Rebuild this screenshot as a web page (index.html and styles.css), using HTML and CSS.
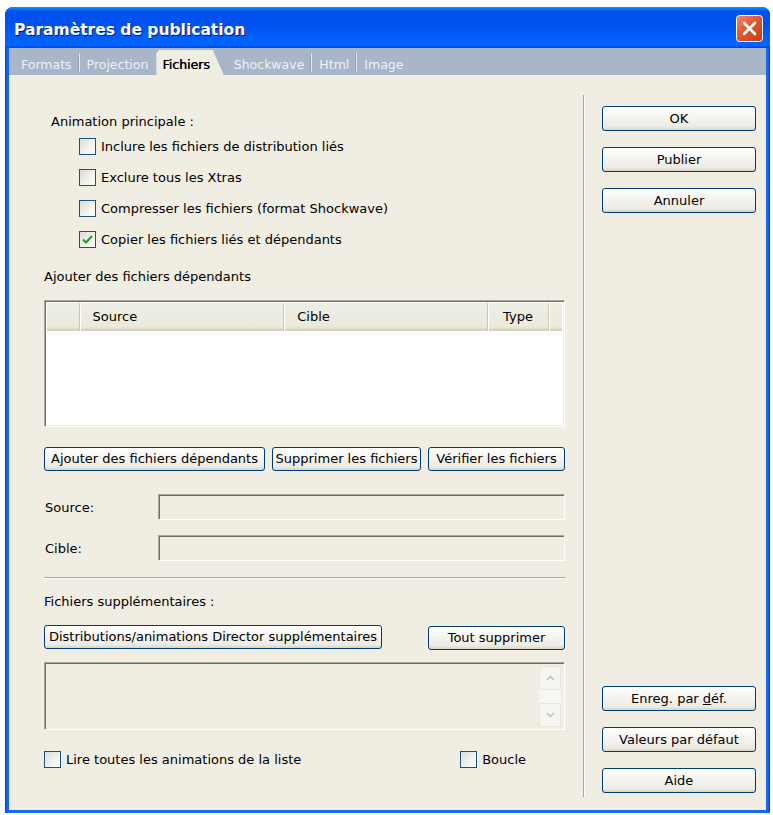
FILE: index.html
```html
<!DOCTYPE html>
<html lang="fr">
<head>
    <meta charset="UTF-8">
    <meta name="viewport" content="width=device-width, initial-scale=1.0">
    <title>Paramètres de publication</title>
    <link rel="stylesheet" href="styles.css">
</head>
<body>
    <div class="window">
        <div class="titlebar">
            <span class="title">Paramètres de publication</span>
            <span class="close">
                <svg width="27" height="27" viewBox="0 0 27 27">
                    <defs>
                        <linearGradient id="closeFill" x1="0" y1="0" x2="1" y2="1">
                            <stop offset="0" stop-color="#f08a6a"/>
                            <stop offset="0.45" stop-color="#e0582f"/>
                            <stop offset="1" stop-color="#c23c14"/>
                        </linearGradient>
                    </defs>
                    <rect x="0.5" y="0.5" width="26" height="26" rx="3" fill="url(#closeFill)" stroke="#fff"/>
                    <path d="M8 8 L19 19 M19 8 L8 19" stroke="#fff" stroke-width="2.6" stroke-linecap="round"/>
                </svg>
            </span>
        </div>
        <div class="frame">
            <div class="tabs">
                <span class="tab">Formats</span><span class="tab-sep"></span>
                <span class="tab">Projection</span>
                <span class="tab active">Fichiers</span>
                <span class="tab">Shockwave</span><span class="tab-sep"></span>
                <span class="tab">Html</span><span class="tab-sep"></span>
                <span class="tab">Image</span>
            </div>
            <div class="page">
                <div class="main">
                    <div class="heading heading-main">Animation principale :</div>
                    <div class="options">
                        <label class="check"><span class="box"></span>Inclure les fichiers de distribution liés</label>
                        <label class="check"><span class="box"></span>Exclure tous les Xtras</label>
                        <label class="check"><span class="box"></span>Compresser les fichiers (format Shockwave)</label>
                        <label class="check">
                            <span class="box">
                                <svg width="15" height="15" viewBox="0 0 15 15"><path d="M3 7.5 L6 10.5 L12 4" fill="none" stroke="#21a121" stroke-width="2.2"/></svg>
                            </span>Copier les fichiers liés et dépendants
                        </label>
                    </div>

                    <div class="heading heading-deps">Ajouter des fichiers dépendants</div>
                    <div class="listview">
                        <div class="lv-header">
                            <span class="col col-icon"></span>
                            <span class="col col-source">Source</span>
                            <span class="col col-target">Cible</span>
                            <span class="col col-type">Type</span>
                            <span class="col col-rest"></span>
                        </div>
                    </div>
                    <div class="btn-row btn-row-deps">
                        <span class="btn btn-add">Ajouter des fichiers dépendants</span>
                        <span class="btn btn-remove">Supprimer les fichiers</span>
                        <span class="btn btn-verify">Vérifier les fichiers</span>
                    </div>

                    <div class="field field-source"><span class="field-label">Source:</span><div class="field-box"></div></div>
                    <div class="field field-target"><span class="field-label">Cible:</span><div class="field-box"></div></div>

                    <div class="hr"></div>

                    <div class="heading heading-extra">Fichiers supplémentaires :</div>
                    <div class="btn-row btn-row-extra">
                        <span class="btn btn-extra">Distributions/animations Director supplémentaires</span>
                        <span class="btn btn-clear">Tout supprimer</span>
                    </div>
                    <div class="extra-list">
                        <div class="scrollbar">
                            <span class="sb-btn">
                                <svg width="9" height="6" viewBox="0 0 9 6"><path d="M1 5 L4.5 1.5 L8 5" fill="none" stroke="#c4c2b6" stroke-width="1.6"/></svg>
                            </span>
                            <span class="sb-track"></span>
                            <span class="sb-btn">
                                <svg width="9" height="6" viewBox="0 0 9 6"><path d="M1 1 L4.5 4.5 L8 1" fill="none" stroke="#c4c2b6" stroke-width="1.6"/></svg>
                            </span>
                        </div>
                    </div>
                    <div class="bottom-opts">
                        <label class="check"><span class="box"></span>Lire toutes les animations de la liste</label>
                        <label class="check"><span class="box"></span>Boucle</label>
                    </div>
                </div>

                <div class="vsep"></div>

                <div class="side">
                    <div class="side-group">
                        <span class="btn">OK</span>
                        <span class="btn">Publier</span>
                        <span class="btn">Annuler</span>
                    </div>
                    <div class="side-group">
                        <span class="btn">Enreg. par <u>d</u>éf.</span>
                        <span class="btn">Valeurs par défaut</span>
                        <span class="btn">Aide</span>
                    </div>
                </div>
            </div>
        </div>
    </div>
</body>
</html>
```

FILE: styles.css
```css
body{
    margin: 0;
    background-color: #fff;
    font-family: "DejaVu Sans", Verdana, sans-serif;
    font-size: 13px;
    color: #000;
}

/* window frame */
.window{
    margin: 7px 0 0 5px;
    width: 765px;
    height: 806px;
    display: flex;
    flex-direction: column;
    border-radius: 8px 8px 0 0;
    background: linear-gradient(to right, #0831d9, #166aee 2px, #166aee calc(100% - 2px), #0831d9);
    overflow: hidden;
}

.titlebar{
    height: 41px;
    flex-shrink: 0;
    display: flex;
    align-items: center;
    justify-content: space-between;
    padding: 0 7px 0 9px;
    background: linear-gradient(to bottom, #0997ff 0%, #0053ee 10%, #0050ee 40%, #0063fb 85%, #0066ff 92%, #005bff 95%, #003dd7 100%);
}

.title{
    margin-top: 5px;
    color: #fff;
    font-weight: bold;
    font-size: 15.5px;
    text-shadow: 1px 1px 0 #0a1883;
}

.close{
    margin-top: 2px;
    width: 27px;
    height: 27px;
    display: block;
}

.close svg{
    display: block;
}

.frame{
    flex: 1;
    margin: 0 4px 3px 4px;
    display: flex;
    flex-direction: column;
    background-color: #f0ede3;
}

/* tab strip */
.tabs{
    height: 27px;
    flex-shrink: 0;
    display: flex;
    align-items: flex-end;
    padding-left: 8px;
    background-color: #a9b5c8;
    font-size: 12.5px;
}

.tab{
    height: 25px;
    line-height: 21px;
    padding: 4px 4px 0 4px;
    box-sizing: border-box;
    color: #eef1f5;
    white-space: nowrap;
}

.tab.active{
    margin: 0 6px 0 4px;
    padding: 4px 14px 0 6px;
    color: #000;
    text-shadow: 0.4px 0 0 #000;
    background-color: #f0ede3;
    clip-path: polygon(0 3px, 3px 0, calc(100% - 11px) 0, 100% 100%, 0 100%);
}

.tab-sep{
    align-self: center;
    margin: 2px 3px 0 3px;
    width: 1px;
    height: 19px;
    background-color: #e4e8ee;
    box-shadow: -1px 0 0 #97a3b8;
}

/* page body */
.page{
    flex: 1;
    display: flex;
}

.main{
    width: 574px;
    box-sizing: border-box;
    padding: 39px 18px 0 35px;
}

.heading{
    line-height: 16px;
    height: 16px;
}

.heading-main{
    margin-left: 7px;
}

.heading-deps{
    margin-top: 21px;
}

.heading-extra{
    margin-top: 15px;
}

.options{
    margin: 8px 0 0 35px;
    display: flex;
    flex-direction: column;
    gap: 14px;
}

.check{
    display: flex;
    align-items: center;
    gap: 5px;
    height: 17px;
    line-height: 17px;
    white-space: nowrap;
}

.box{
    width: 17px;
    height: 17px;
    box-sizing: border-box;
    border: 1px solid #1c5180;
    background: linear-gradient(135deg, #dcdcd7, #f6f6f3 70%, #fff);
    display: flex;
    align-items: center;
    justify-content: center;
    flex-shrink: 0;
}

/* list of dependent files */
.listview{
    margin-top: 15px;
    height: 127px;
    box-sizing: border-box;
    border: 1px solid;
    border-color: #aca899 #fff #fff #aca899;
    box-shadow: inset 1px 1px 0 #716f64, inset -1px -1px 0 #f1efe2;
    background-color: #fff;
    padding: 2px 2px 1px 2px;
}

.lv-header{
    display: flex;
    height: 28px;
    background: linear-gradient(to bottom, #efeee6, #ebeadb 85%, #dedbcb 92%, #d0ccb9);
}

.col{
    height: 100%;
    box-sizing: border-box;
    line-height: 27px;
    padding-left: 12px;
    border-right: 1px solid #cac7b6;
    border-left: 1px solid #fff;
}

.col-icon{
    width: 33px;
    border-left: 0;
}

.col-source{
    width: 209px;
}

.col-target{
    width: 208px;
}

.col-type{
    width: 62px;
    padding-left: 14px;
}

.col-rest{
    flex: 1;
    border-right: 0;
}

/* push buttons */
.btn{
    display: block;
    height: 24px;
    line-height: 22px;
    text-align: center;
    padding: 0 2px;
    box-sizing: border-box;
    border: 1px solid #003c74;
    border-radius: 3px;
    background: linear-gradient(to bottom, #fff, #f6f5f1 40%, #ecebe5 85%, #d8d3c6);
    white-space: nowrap;
    cursor: pointer;
}

.btn-row{
    display: flex;
    justify-content: space-between;
    align-items: flex-start;
}

.btn-row-deps{
    margin-top: 20px;
}

.btn-row-extra{
    margin-top: 15px;
}

.btn-add{
    width: 221px;
}

.btn-remove{
    width: 149px;
}

.btn-verify{
    width: 137px;
}

.btn-extra{
    width: 338px;
}

.btn-clear{
    width: 137px;
    margin-top: 1px;
}

/* source / target fields */
.field{
    display: flex;
    align-items: center;
    height: 26px;
}

.field-source{
    margin-top: 23px;
}

.field-target{
    margin-top: 15px;
}

.field-label{
    width: 113px;
    padding-left: 1px;
}

.field-box,
.extra-list{
    box-sizing: border-box;
    border: 1px solid;
    border-color: #aca899 #fff #fff #aca899;
    box-shadow: inset 1px 1px 0 #716f64, inset -1px -1px 0 #f1efe2;
    background-color: #f0ede3;
}

.field-box{
    flex: 1;
    height: 26px;
}

.hr{
    margin-top: 16px;
    height: 1px;
    background-color: #aca899;
    border-bottom: 1px solid #fff;
}

/* additional files list */
.extra-list{
    margin-top: 12px;
    height: 68px;
    display: flex;
    justify-content: flex-end;
    padding: 3px 3px 2px 0;
}

.scrollbar{
    width: 22px;
    display: flex;
    flex-direction: column;
    background-color: #f7f6f1;
}

.sb-btn{
    height: 24px;
    box-sizing: border-box;
    border: 1px solid #e8e6dd;
    border-radius: 2px;
    background-color: #f6f5ef;
    display: flex;
    align-items: center;
    justify-content: center;
}

.sb-track{
    flex: 1;
}

.bottom-opts{
    margin-top: 21px;
    display: flex;
    justify-content: space-between;
    padding-right: 39px;
}

/* right column */
.vsep{
    width: 1px;
    margin: 20px 0 13px 0;
    background-color: #aca899;
    border-right: 1px solid #fff;
}

.side{
    flex: 1;
    display: flex;
    flex-direction: column;
    justify-content: space-between;
    padding: 31px 10px 17px 17px;
}

.side-group{
    display: flex;
    flex-direction: column;
    gap: 16px;
}

.side .btn{
    height: 25px;
    line-height: 23px;
    width: 154px;
}
```
